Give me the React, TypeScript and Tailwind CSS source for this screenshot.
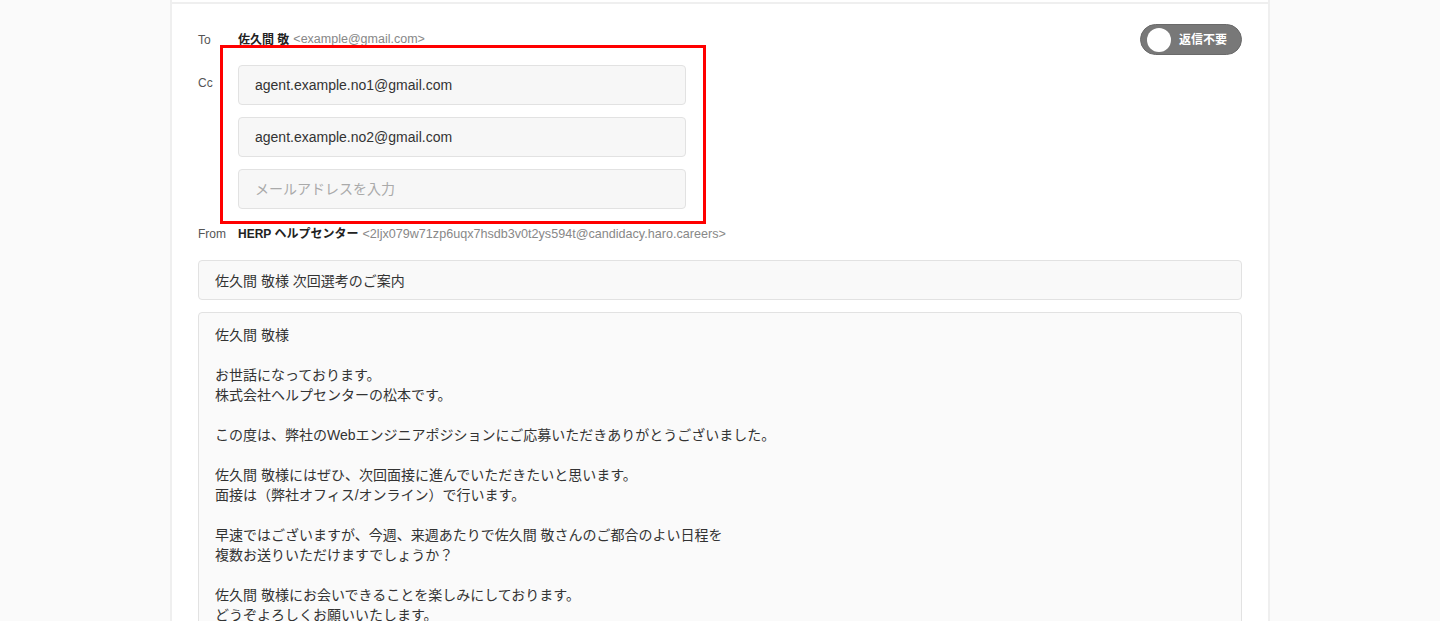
import { useState } from 'react'

const FONT = { fontFamily: '"Liberation Sans", "Noto Sans CJK JP", sans-serif' }

const bodyText = `佐久間 敬様

お世話になっております。
株式会社ヘルプセンターの松本です。

この度は、弊社のWebエンジニアポジションにご応募いただきありがとうございました。

佐久間 敬様にはぜひ、次回面接に進んでいただきたいと思います。
面接は（弊社オフィス/オンライン）で行います。

早速ではございますが、今週、来週あたりで佐久間 敬さんのご都合のよい日程を
複数お送りいただけますでしょうか？

佐久間 敬様にお会いできることを楽しみにしております。
どうぞよろしくお願いいたします。

株式会社ヘルプセンター
松本`

export default function App() {
  const [ccList, setCcList] = useState(['agent.example.no1@gmail.com', 'agent.example.no2@gmail.com', ''])
  const [noReply, setNoReply] = useState(false)
  const [subject, setSubject] = useState('佐久間 敬様 次回選考のご案内')

  return (
    <div className="min-h-screen bg-[#fafafa] text-[#333]" style={FONT}>
      <div className="mx-auto w-[1100px] min-h-screen bg-white border-x-2 border-[#efefef]">
        {/* header edge */}
        <div className="h-[4px] border-b-2 border-[#efefef]" />

        <div className="px-[26px] pt-[20px] pb-10">
          {/* To */}
          <div className="flex items-center justify-between h-[31px]">
            <div className="flex items-center text-[12px]">
              <span className="w-[40px] text-[#555]">To</span>
              <span className="font-bold text-[#222]">佐久間 敬</span>
              <span className="ml-1 text-[12.5px] text-[#888]">&lt;example@gmail.com&gt;</span>
            </div>
            <button
              onClick={() => setNoReply(!noReply)}
              className="flex items-center w-[102px] h-[31px] rounded-full bg-[#787878] pl-[6px] border border-[#6a6a6a]"
            >
              <span className="w-[24px] h-[24px] rounded-full bg-white" />
              <span className="ml-[8px] text-[12px] font-bold text-white">返信不要</span>
            </button>
          </div>

          {/* Cc */}
          <div className="flex mt-[10px]">
            <span className="w-[40px] text-[12px] text-[#555] leading-[36px]">Cc</span>
            <div className="relative flex flex-col gap-3 w-[448px]">
              {ccList.map((cc, i) => (
                <input
                  key={i}
                  type="text"
                  value={cc}
                  onChange={(e) => setCcList(ccList.map((c, j) => (j === i ? e.target.value : c)))}
                  placeholder="メールアドレスを入力"
                  className="h-[40px] w-full px-4 text-[14px] text-[#333] bg-[#f7f7f7] border border-[#e2e2e2] rounded-[4px] placeholder:text-[#aaa] outline-none"
                  style={FONT}
                />
              ))}
              {/* annotation */}
              <div className="absolute left-[-18px] top-[-20px] w-[486px] h-[179px] border-[3px] border-[#ff0000] pointer-events-none" />
            </div>
          </div>

          {/* From */}
          <div className="flex items-center mt-[17px] h-[16px] text-[12px]">
            <span className="w-[40px] text-[#555]">From</span>
            <span className="font-bold text-[#222]">HERP ヘルプセンター</span>
            <span className="ml-1 text-[12.6px] text-[#888]">&lt;2ljx079w71zp6uqx7hsdb3v0t2ys594t@candidacy.haro.careers&gt;</span>
          </div>

          {/* Subject */}
          <input
            type="text"
            value={subject}
            onChange={(e) => setSubject(e.target.value)}
            className="mt-[18px] h-[40px] w-full px-4 text-[14px] text-[#333] bg-[#f9f9f9] border border-[#e2e2e2] rounded-[4px] outline-none"
            style={FONT}
          />

          {/* Body */}
          <div className="mt-3 min-h-[400px] px-4 pt-[12px] pb-[11px] text-[14px] leading-[20px] whitespace-pre-line bg-[#fafafa] border border-[#e2e2e2] rounded-[4px]">
            {bodyText}
          </div>
        </div>
      </div>
    </div>
  )
}
